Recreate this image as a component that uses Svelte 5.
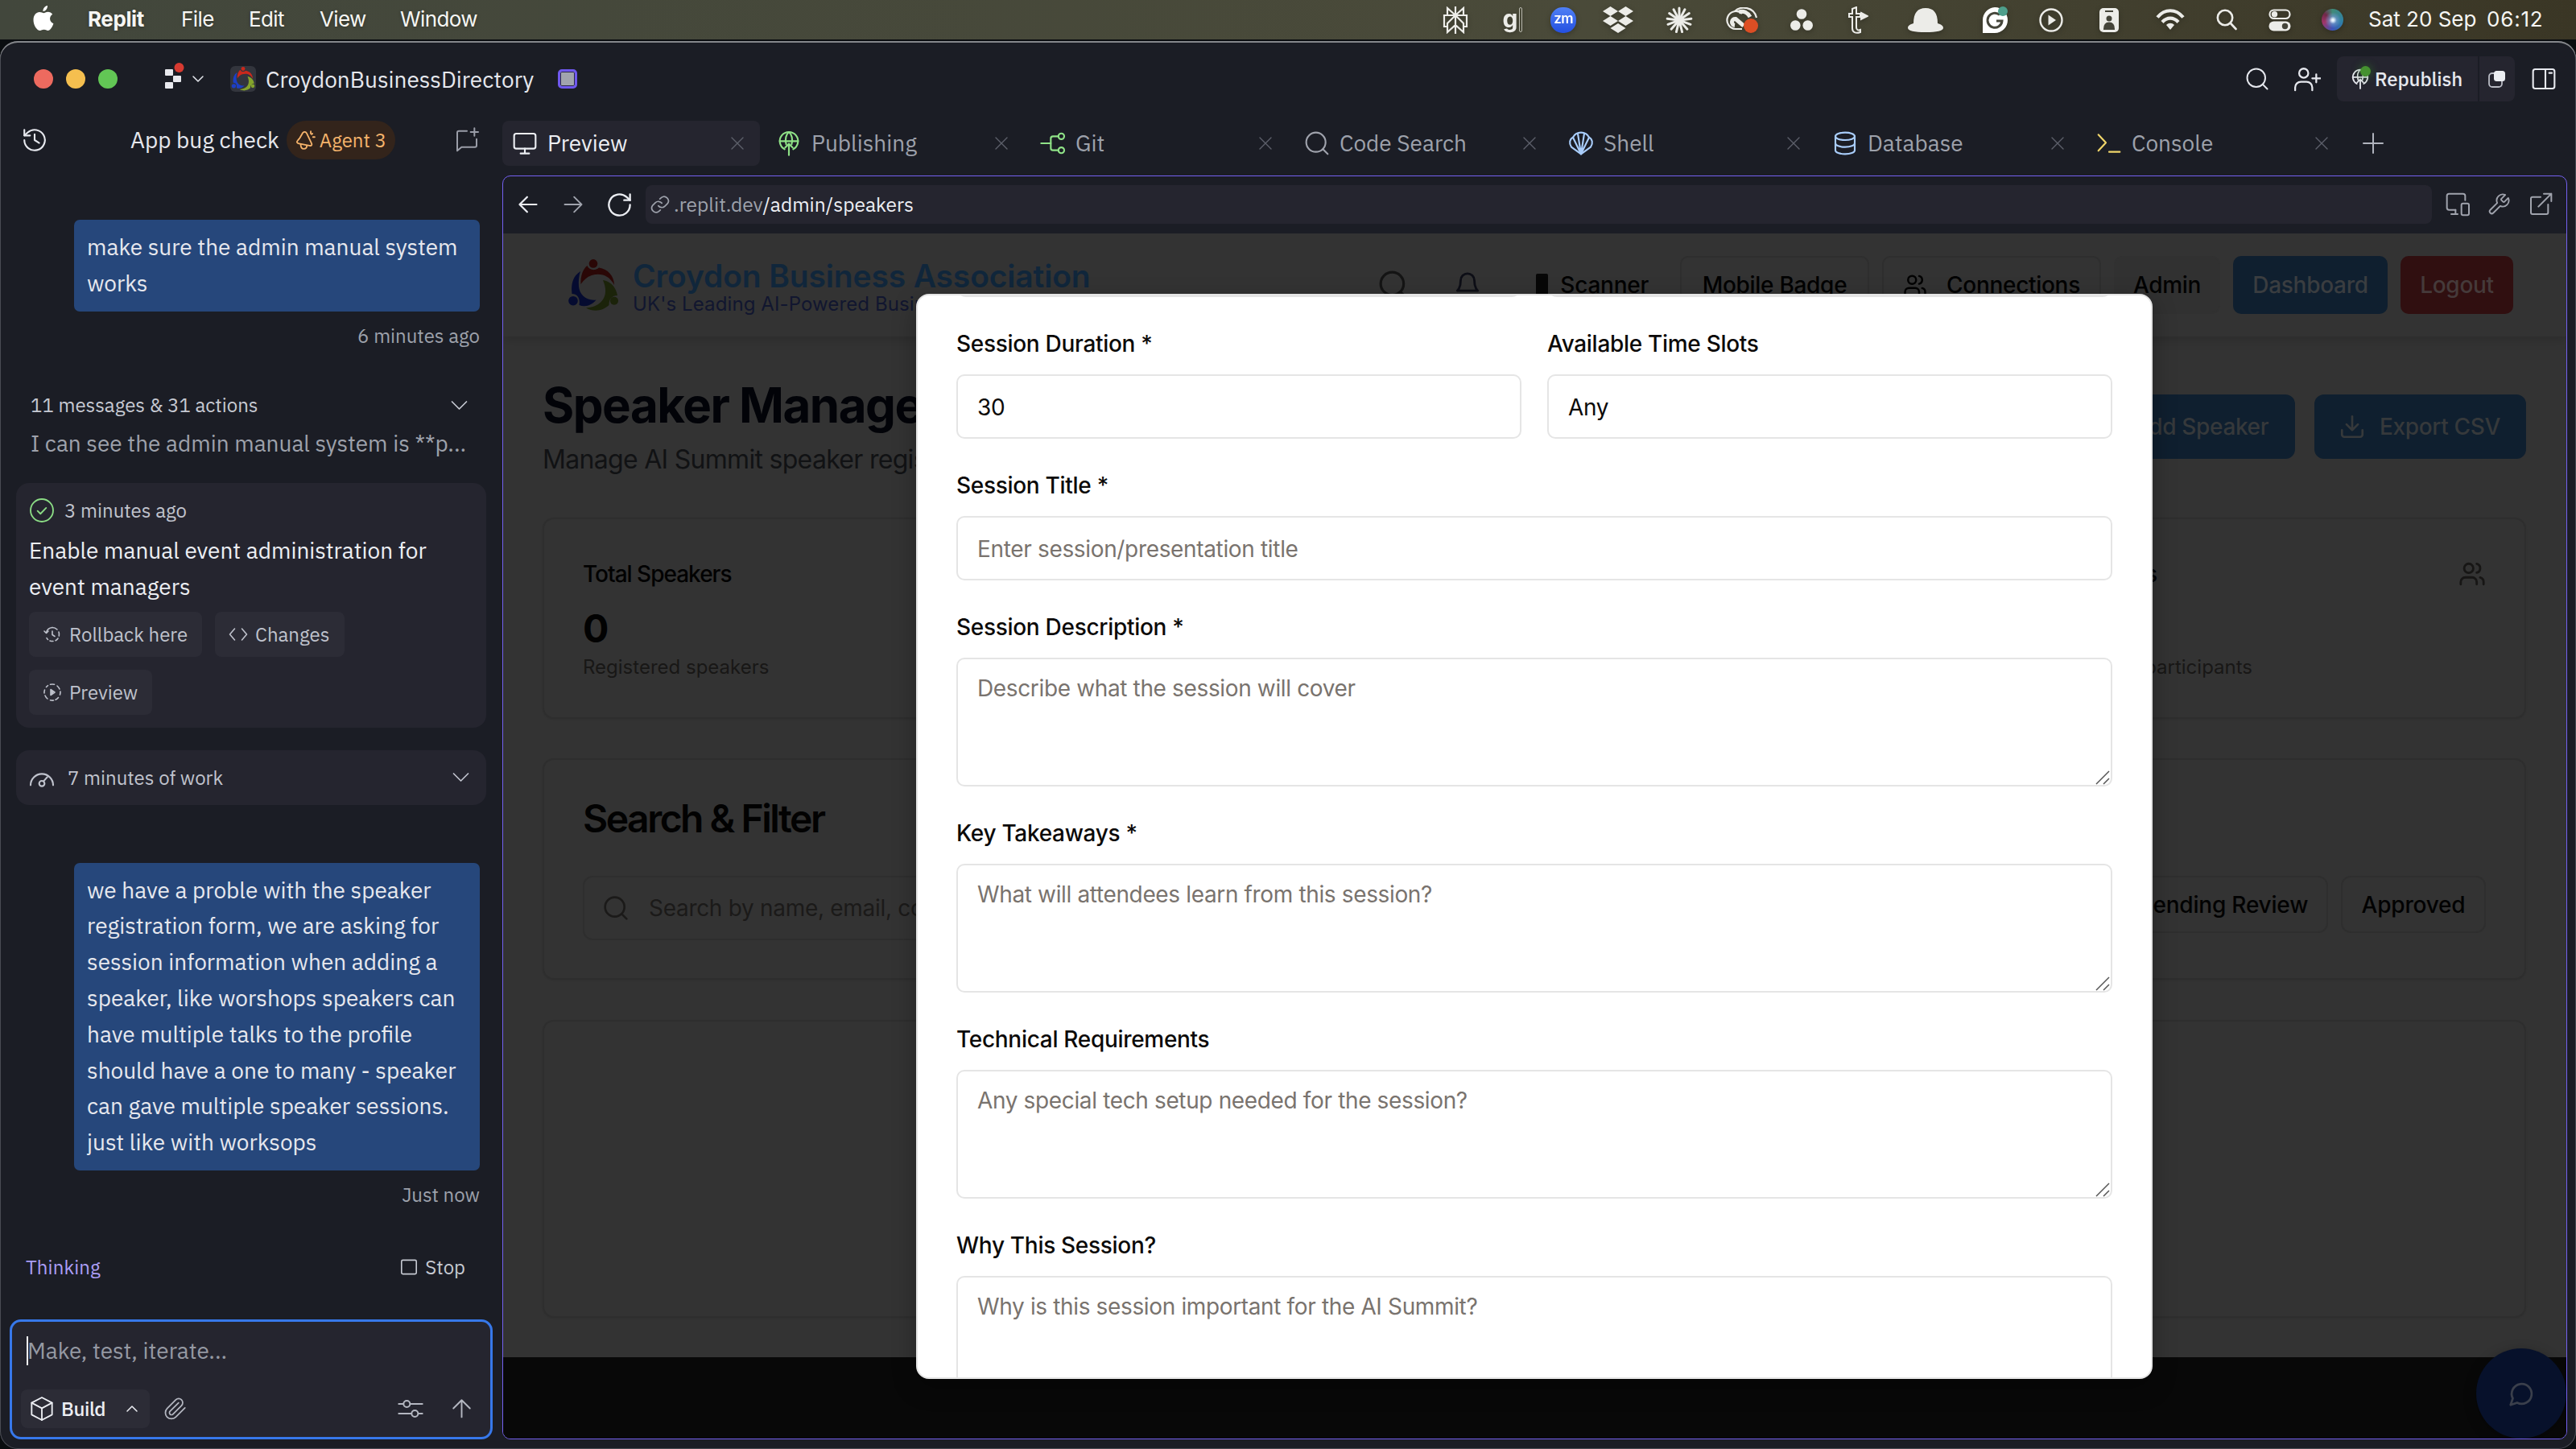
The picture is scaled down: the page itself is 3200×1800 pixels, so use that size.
<script>
  const icons = {
    history: ['M3 12a9 9 0 1 0 3-6.7L3 8', 'M3 3v5h5', 'M12 7v5l4 2.5'],
    chatplus: ['M21 11v6a1.5 1.5 0 0 1-1.5 1.5H7L3 22V5a1.5 1.5 0 0 1 1.500-1.500H12', 'M19 1v7M15.500 4.500h7'],
    monitor: ['M4 3h16a2 2 0 0 1 2 2v10a2 2 0 0 1-2 2H4a2 2 0 0 1-2-2V5a2 2 0 0 1 2-2z', 'M12 17v4.500M8 21.500h8'],
    close: ['M5 5l14 14M19 5L5 19'],
    publish: ['M8 17.500A8.500 8.500 0 1 1 16 17.500', 'M3.500 10h17', 'M9.500 13C8 8 9.500 3.500 12 1.500c2.500 2 4 6.500 2.500 11.500', 'M12 23V12.500M8.500 16l3.500-3.500 3.500 3.500'],
    git: ['M17 5.500H12a2 2 0 0 0-2 2v9a2 2 0 0 0 2 2h5', 'M1 12h9', 'M22.500 5.500a2.700 2.700 0 1 1-5.400 0 2.700 2.700 0 0 1 5.400 0z', 'M22.500 18.500a2.700 2.700 0 1 1-5.400 0 2.700 2.700 0 0 1 5.400 0z'],
    search: ['M20 11a9 9 0 1 1-18 0 9 9 0 0 1 18 0z', 'M17.500 17.500L22 22'],
    shell: ['M12 22L3 15.500C0.500 12 1.500 8 4.500 6.500 6 3.500 9 2 12 2s6 1.500 7.500 4.500c3 1.500 4 5.500 1.500 9z', 'M12 22L4.500 6.500M12 22L9 3M12 22l3-19M12 22l7.500-15.500'],
    database: ['M21 5.500c0 2-4 3.500-9 3.500S3 7.500 3 5.500 7 2 12 2s9 1.500 9 3.500z', 'M3 5.500v13C3 20.500 7 22 12 22s9-1.500 9-3.500v-13', 'M3 12c0 2 4 3.500 9 3.500s9-1.500 9-3.500'],
    console: ['M2 4l7 7.500L2 19', 'M12 20h10'],
    plus: ['M12 3v18M3 12h18'],
    back: ['M21 12H3M11 4l-8 8 8 8'],
    forward: ['M3 12h18M13 4l8 8-8 8'],
    reload: ['M21 12a9 9 0 1 1-3-6.700L21 8', 'M21 3v5h-5'],
    link: ['M10 13.500a5 5 0 0 0 7.500.5l3-3a5 5 0 0 0-7-7l-1.800 1.700', 'M14 10.500a5 5 0 0 0-7.500-.5l-3 3a5 5 0 0 0 7 7l1.800-1.700'],
    devices: ['M10 17H4a2 2 0 0 1-2-2V4a2 2 0 0 1 2-2h13a2 2 0 0 1 2 2v4', 'M10 17v4M6 21h6', 'M17 11h4a1.500 1.500 0 0 1 1.500 1.500v8A1.500 1.500 0 0 1 21 22h-4a1.500 1.500 0 0 1-1.500-1.500v-8A1.500 1.500 0 0 1 17 11z'],
    wrench: ['M14.700 6.300a1 1 0 0 0 0 1.400l1.600 1.600a1 1 0 0 0 1.400 0l3.770-3.770a6 6 0 0 1-7.940 7.940l-6.910 6.910a2.120 2.120 0 0 1-3-3l6.910-6.910a6 6 0 0 1 7.940-7.940l-3.760 3.760z'],
    external: ['M12 5H4.500A1.500 1.500 0 0 0 3 6.500v13A1.500 1.500 0 0 0 4.500 21h13a1.500 1.500 0 0 0 1.500-1.500V12', 'M15 2h7v7M22 2L10 14'],
    userplus: ['M13 7a4 4 0 1 1-8 0 4 4 0 0 1 8 0z', 'M1.500 22v-2.500a5 5 0 0 1 5-5h5a5 5 0 0 1 5 5V22', 'M20 8v7M16.500 11.500h7'],
    panel: ['M4 3h16a2 2 0 0 1 2 2v14a2 2 0 0 1-2 2H4a2 2 0 0 1-2-2V5a2 2 0 0 1 2-2z', 'M13.500 3v18M17 6.500h2.500'],
    down: ['M4 8l8 8 8-8'],
    up: ['M4 16l8-8 8 8'],
    check: ['M22.500 12a10.500 10.500 0 1 1-21 0 10.500 10.500 0 0 1 21 0z', 'M8 12.500l2.700 2.700 5.300-5.500'],
    rollback: ['M2 8l2.500 2.500L7 8', 'M4.500 10A8.500 8.500 0 0 1 12 3.500', 'M12 3.500a8.500 8.500 0 0 1 6 2.500M20 9a8.500 8.500 0 0 1 .3 5M19 17a8.500 8.500 0 0 1-3 2.700M13 20.500a8.500 8.500 0 0 1-4-.5M6.500 18.500a8 8 0 0 1-1.500-2', 'M12 8v4.500l3 2'],
    code: ['M7.500 5L1.500 12l6 7M16.500 5l6 7-6 7'],
    play: ['M9.500 2.300a10 10 0 0 1 5 0M18 4a10 10 0 0 1 3 4M22 11a10 10 0 0 1-.5 4M19.500 18.500a10 10 0 0 1-3.500 2.700M13.500 22a10 10 0 0 1-4-.3M6 20a10 10 0 0 1-3-4M2 13a10 10 0 0 1 .5-4M4.500 5.500A10 10 0 0 1 6.500 3.600', 'M10 8.500l5 3.500-5 3.500z', 'M11 10.500l2 1.500-2 1.500z'],
    gauge: ['M1.500 19a10.500 10.500 0 1 1 21 0', 'M14.500 17.500a2.500 2.500 0 1 1-5 0 2.500 2.500 0 0 1 5 0z', 'M13.500 15.500L17 11.500'],
    square: ['M5 4h14a1.500 1.500 0 0 1 1.500 1.500v13A1.500 1.500 0 0 1 19 20H5a1.500 1.500 0 0 1-1.500-1.500v-13A1.500 1.500 0 0 1 5 4z'],
    cube: ['M12 1.500l9.500 5v11L12 22.500l-9.500-5v-11z', 'M2.500 6.500L12 11.500l9.500-5M12 11.500v11'],
    clip: ['M21.400 11.050l-9.190 9.190a6 6 0 0 1-8.490-8.490l8.570-8.570A4 4 0 1 1 18 8.840l-8.590 8.570a2 2 0 0 1-2.830-2.830l8.490-8.480'],
    sliders: ['M1 7.500h4.500M11.500 7.500H23M8.500 4.500a3 3 0 1 0 0 6 3 3 0 0 0 0-6zM1 16.500h12M19 16.500h4M16 13.500a3 3 0 1 0 0 6 3 3 0 0 0 0-6z'],
    send: ['M12 21V3.500M3.500 12L12 3.500l8.500 8.500'],
    agent: ['M9.500 3.500C11 2 13 2.500 14 4.500l5.500 11.500c.5 1.500 0 2.500-1.500 2.500L5 16C2.500 15.500 2 14 3.500 12.500L6 9.500z', 'M7 17c0 3 1.500 5 3.500 5s3.500-1.500 3.500-3.500', 'M18.500 2v2.500M21 8.500h2M20.500 4.500l-1 1'],
    users: ['M16 21v-2a4 4 0 0 0-4-4H6a4 4 0 0 0-4 4v2', 'M13 7a4 4 0 1 1-8 0 4 4 0 0 1 8 0z', 'M22 21v-2a4 4 0 0 0-3-3.870', 'M16 3.130a4 4 0 0 1 0 7.750'],
    bell: ['M6 8a6 6 0 0 1 12 0c0 7 3 9 3 9H3s3-2 3-9', 'M10.300 21a1.940 1.940 0 0 0 3.400 0'],
    download: ['M21 15v4a2 2 0 0 1-2 2H5a2 2 0 0 1-2-2v-4', 'M7 10l5 5 5-5M12 15V3'],
    bubble: ['M7.900 20A9 9 0 1 0 4 16.100L2 22Z']
  };

  const tabs = [
    { label: 'Preview', icon: 'monitor', tone: 'white', active: true },
    { label: 'Publishing', icon: 'publish', tone: 'green' },
    { label: 'Git', icon: 'git', tone: 'green' },
    { label: 'Code Search', icon: 'search', tone: 'grey' },
    { label: 'Shell', icon: 'shell', tone: 'blue' },
    { label: 'Database', icon: 'database', tone: 'blue' },
    { label: 'Console', icon: 'console', tone: 'yellow' }
  ];

  const areas = [
    { label: 'Session Description *', hint: 'Describe what the session will cover' },
    { label: 'Key Takeaways *', hint: 'What will attendees learn from this session?' },
    { label: 'Technical Requirements', hint: 'Any special tech setup needed for the session?' },
    { label: 'Why This Session?', hint: 'Why is this session important for the AI Summit?' }
  ];

  const request = [
    'we have a proble with the speaker',
    'registration form, we are asking for',
    'session information when adding a',
    'speaker, like worshops speakers can',
    'have multiple talks to the profile',
    'should have a one to many - speaker',
    'can gave multiple speaker sessions.',
    'just like with worksops'
  ];

  const rays = [0, 1, 2, 3, 4, 5, 6, 7, 8, 9, 10, 11, 12].map((i) => i * (360 / 13));
</script>

{#snippet icon(name, size, weight = 1.5)}
  <svg class="icon" width={size} height={size} viewBox="0 0 24 24" fill="none" stroke="currentColor" stroke-width={weight} stroke-linecap="round" stroke-linejoin="round">
    {#each icons[name] as d}<path {d} />{/each}
  </svg>
{/snippet}

{#snippet people(width, height, red, blue, green)}
  <svg class="icon" {width} {height} viewBox="0 0 62 65">
    <g fill={red}><circle cx="31" cy="5.400" r="5.300" /><path d="M15.500 31C15 21 18 12 23.500 8c2 5.500 9.500 7 14.500 2.500C49 12 57 21 57 32 51 20 40 16.500 29 20c-6 2-10 6-13.500 11z" /></g>
    <g fill={blue}><circle cx="6" cy="51.700" r="5.800" /><path d="M15 15C6 21 3 30 4.500 43c7 0 10.500 6 9 14 8 3 16 0 21-6.500C22 52 14 44 13 34c-.5-7 0-13 2-19z" /></g>
    <g fill={green}><circle cx="57" cy="51.700" r="5" /><path d="M43 26c9 1.500 16 8 18 19-6 0-10.500 4-10.500 12C43 64 32 66 22 60.500 37 60 53 49 43 26z" /></g>
  </svg>
{/snippet}

<div class="screen">
  <header class="menubar">
    <nav class="menus">
      <svg class="apple" width="26" height="32" viewBox="0 0 26 32" fill="#fff"><path d="M18 0c.3 3.500-2.300 7-5.600 7C12 3.800 14.900.5 18 0z" /><path d="M13.300 9.200C14.600 9.200 16 7.800 18.600 7.800c2.200 0 4.300 1.100 5.600 3-4.700 2.900-3.900 9.600 1.200 11.400C24.300 26 21.400 31 18.500 31c-1.900 0-2.600-1.200-4.900-1.200S10.500 31 8.700 31C5 31 .5 24.400.5 17.700.5 11.500 4.300 8 8 8c2.400 0 4 1.200 5.300 1.200z" /></svg>
      <b class="m-app">Replit</b><span class="m-file">File</span><span class="m-edit">Edit</span><span class="m-view">View</span><span>Window</span>
    </nav>
    <div class="tray">
      <svg width="32" height="34" viewBox="0 0 32 34" fill="none" stroke="#ecece8" stroke-width="2.200"><path d="M16 0v34M16 11L6 2v9M16 11l10-9v9M5 25H2V11h28v14h-3M16 11L6 21v11l10-9 10 9V21z" /></svg>
      <span class="gee">g<i></i></span>
      <span class="zoom">zm</span>
      <svg width="38" height="33" viewBox="0 0 38 33" fill="#ecece8"><path d="M9.500 0l9.500 6-9.500 6L0 6zM28.500 0L38 6l-9.500 6L19 6zM9.500 12l9.500 6-9.500 6L0 18zM28.500 12l9.500 6-9.500 6-9.500-6zM19 21l9.500 6-9.500 6-9.500-6z" /></svg>
      <svg width="34" height="34" viewBox="-17 -17 34 34" stroke="#ecece8" stroke-width="3" stroke-linecap="round"><circle r="5" fill="#ecece8" stroke="none" />{#each rays as r}<path d="M0 -3V-15" transform="rotate({r})" />{/each}</svg>
      <svg width="40" height="32" viewBox="0 0 40 32" fill="none" stroke="#ecece8" stroke-width="2.600"><path d="M11 5C18-2 35-1 38 13M20 27H12A11 11 0 1 1 20 8" stroke-width="2.200" /><path d="M22 23L12 14.500a4 4 0 0 0-1 8M16 6c6-2 11 1 14 6" stroke-width="5" /><circle cx="31" cy="23" r="9" fill="#dc4e24" stroke="none" /></svg>
      <svg width="28" height="28" viewBox="0 0 28 28" fill="#ecece8"><circle cx="14" cy="6.500" r="6.300" /><circle cx="6.300" cy="20.500" r="6.300" /><circle cx="21.700" cy="20.500" r="6.300" /></svg>
      <svg width="26" height="34" viewBox="0 0 26 34" fill="none" stroke="#ecece8" stroke-width="2"><path d="M6 3l5-2v8h5v4h-5v13c0 3 2 4 5 3v3c-6 2-10 0-10-5V13H2V9h4z" /><path d="M17 8l8 4-8 4z" fill="#ecece8" /></svg>
      <svg width="44" height="30" viewBox="0 0 44 30" fill="#ecece8"><path d="M7 19C7 6 12 0 22 0s15 6 15 19c4 1 7 3 7 5.500 0 4-8 5.500-22 5.500S0 28.500 0 24.500C0 22 3 20 7 19z" /></svg>
      <svg width="34" height="34" viewBox="0 0 34 34"><path d="M17 1a16 16 0 1 1 0 32H2V17A16 16 0 0 1 17 1z" fill="#fff" /><path d="M23 10.500A9 9 0 1 0 26 18h-7" fill="none" stroke="#45453a" stroke-width="3" /><circle cx="27" cy="6" r="6" fill="#4e9f8c" /></svg>
      <svg width="30" height="30" viewBox="0 0 30 30" fill="#ecece8"><circle cx="15" cy="15" r="13.500" fill="none" stroke="#ecece8" stroke-width="2.400" /><path d="M11.500 8.500L21 15l-9.500 6.500z" /></svg>
      <svg width="24" height="30" viewBox="0 0 24 30"><rect width="24" height="30" rx="5" fill="#ecece8" /><path d="M7 4h10M6 26c0-5 2.500-7.500 6-7.500s6 2.500 6 7.500z" fill="#45453a" stroke="#45453a" stroke-width="2" /><circle cx="12" cy="13" r="3.500" fill="#45453a" /></svg>
      <svg width="36" height="27" viewBox="0 0 36 27" fill="none" stroke="#ecece8" stroke-width="4.200"><path d="M2 10.500C11-.5 25-.5 34 10.500M8 16.500c6-6.500 14-6.500 20 0" /><path d="M18 26l-5-6c3-3 7-3 10 0z" fill="#ecece8" stroke="none" /></svg>
      <svg width="26" height="27" viewBox="0 0 26 27" fill="none" stroke="#ecece8" stroke-width="2.600" stroke-linecap="round"><circle cx="11" cy="11" r="9.200" /><path d="M18 18l6.500 7" /></svg>
      <svg width="28" height="28" viewBox="0 0 28 28"><rect x="1.500" y="1.500" width="25" height="10.500" rx="5.200" fill="none" stroke="#ecece8" stroke-width="2.200" /><circle cx="7.500" cy="6.700" r="3.700" fill="#ecece8" /><rect x=".5" y="15.500" width="27" height="12" rx="6" fill="#ecece8" /><circle cx="20.500" cy="21.500" r="3.700" fill="#45453a" /></svg>
      <i class="siri"></i>
    </div>
    <span class="date">Sat 20 Sep</span><span class="clock">06:12</span>
  </header>

  <main class="window">
    <div class="titlebar">
      <div class="lights"><i class="r"></i><i class="y"></i><i class="g"></i></div>
      <svg class="replit" width="24" height="32" viewBox="0 0 24 32" fill="#e8e9ee"><rect y="8" width="10" height="8" rx="1" /><rect x="10" y="16" width="10" height="8" rx="1" /><rect y="24" width="10" height="8" rx="1" /><circle cx="17.500" cy="6" r="6" fill="#d73a31" /></svg>
      <span class="chev">{@render icon('down', 18, 2)}</span>
      <span class="project">{@render people(30, 30, '#c9281c', '#1d3fc4', '#84a32c')}</span>
      <span class="name">CroydonBusinessDirectory</span>
      <i class="running"></i>
      <div class="actions">
        <span class="a-search">{@render icon('search', 30, 1.6)}</span>
        <span class="a-user">{@render icon('userplus', 34, 1.6)}</span>
        <span class="republish"><span class="live">{@render icon('publish', 26, 1.7)}<i></i></span>Republish</span>
        <span class="stack"><svg width="22" height="22" viewBox="0 0 22 22"><rect x="1" y="4" width="16" height="17" rx="4" fill="none" stroke="#b9bbc4" stroke-width="1.800" /><rect x="7" y="1" width="14" height="13" rx="3.500" fill="#eceef2" /></svg></span>
        <span class="a-panel">{@render icon('panel', 32, 1.6)}</span>
      </div>
    </div>

    <div class="body">
      <aside class="chat">
        <div class="chat-head">
          {@render icon('history', 34, 1.5)}
          <div class="topic">App bug check<span class="agent">{@render icon('agent', 26, 1.7)}Agent 3</span></div>
          <span class="dim">{@render icon('chatplus', 32, 1.5)}</span>
        </div>
        <div class="bubble first">make sure the admin manual system<br />works</div>
        <div class="stamp">6 minutes ago</div>
        <div class="summary"><span>11 messages &amp; 31 actions</span>{@render icon('down', 27, 1.5)}</div>
        <div class="snippet">I can see the admin manual system is **p...</div>
        <section class="card">
          <div class="done"><span class="green">{@render icon('check', 32, 1.4)}</span><span>3 minutes ago</span></div>
          <div class="headline">Enable manual event administration for<br />event managers</div>
          <div class="chips">
            <span class="chip roll">{@render icon('rollback', 24, 1.6)}Rollback here</span>
            <span class="chip changes">{@render icon('code', 24, 1.6)}Changes</span>
            <span class="chip prev">{@render icon('play', 24, 1.6)}Preview</span>
          </div>
        </section>
        <div class="work">{@render icon('gauge', 32, 1.6)}<span>7 minutes of work</span>{@render icon('down', 27, 1.5)}</div>
        <div class="bubble second">{#each request as line}<div>{line}</div>{/each}</div>
        <div class="stamp later">Just now</div>
        <div class="status"><span class="thinking">Thinking</span><span class="stop">{@render icon('square', 26, 1.5)}Stop</span></div>
        <div class="composer">
          <div class="prompt"><i></i>Make, test, iterate...</div>
          <div class="tools">
            <span class="build">{@render icon('cube', 32, 1.4)}<b>Build</b>{@render icon('up', 18, 2)}</span>
            <span class="clip">{@render icon('clip', 30, 1.4)}</span>
            <span class="sliders">{@render icon('sliders', 32, 1.5)}</span>
            <span class="send">{@render icon('send', 29, 1.6)}</span>
          </div>
        </div>
      </aside>

      <section class="workspace">
        <div class="tabs">
          {#each tabs as tab}
            <div class="tab" class:active={tab.active}>
              <span class="lead {tab.tone}">{@render icon(tab.icon, 32, 1.6)}</span>
              <span class="label">{tab.label}</span>
              <span class="x">{@render icon('close', 24, 1.4)}</span>
            </div>
          {/each}
          <span class="add">{@render icon('plus', 32, 1.5)}</span>
        </div>

        <div class="pane">
          <div class="address">
            <span class="white b1">{@render icon('back', 28, 1.9)}</span>
            <span class="grey b2">{@render icon('forward', 28, 1.6)}</span>
            <span class="white b3">{@render icon('reload', 35, 1.6)}</span>
            <div class="url">{@render icon('link', 26, 1.6)}<span>.replit.dev<b>/admin/speakers</b></span></div>
            <span class="grey n1">{@render icon('devices', 32, 1.5)}</span>
            <span class="grey n2">{@render icon('wrench', 30, 1.5)}</span>
            <span class="grey n3">{@render icon('external', 32, 1.5)}</span>
          </div>

          <div class="page">
            <div class="site-head">
              {@render people(62, 65, '#2a0706', '#050b30', '#1b230a')}
              <div class="brand"><strong>Croydon Business Association</strong><span>UK's Leading AI-Powered Business Network</span></div>
              <div class="site-nav">
                <span class="s-search">{@render icon('search', 38, 2)}</span>
                <span class="s-bell">{@render icon('bell', 34, 2)}</span>
                <span class="scanner"><i></i>Scanner</span>
                <span class="nav-btn mobile">Mobile Badge</span>
                <span class="nav-btn conn">{@render icon('users', 30, 2)}Connections</span>
                <span class="nav-btn admin">Admin</span>
                <span class="nav-btn dash">Dashboard</span>
                <span class="nav-btn out">Logout</span>
              </div>
            </div>

            <div class="content">
              <div class="hero">
                <div><h1>Speaker Manage</h1><p>Manage AI Summit speaker registrations</p></div>
                <div class="hero-btns">
                  <span class="blue-btn add-speaker">{@render icon('plus', 30, 2)}Add Speaker</span>
                  <span class="blue-btn export">{@render icon('download', 34, 1.9)}Export CSV</span>
                </div>
              </div>
              <div class="box stats">
                <div><h3>Total Speakers</h3><strong>0</strong><p>Registered speakers</p></div>
                <div class="attend"><h3>Attendees</h3><strong></strong><p>Total participants</p></div>
                <span class="s-users">{@render icon('users', 34, 2)}</span>
              </div>
              <div class="box filter">
                <h2>Search &amp; Filter</h2>
                <div class="filter-row">
                  <div class="find">{@render icon('search', 32, 2)}<span>Search by name, email, company</span></div>
                  <span class="pill pending">Pending Review</span>
                  <span class="pill approved">Approved</span>
                </div>
              </div>
              <div class="box empty"></div>
            </div>
            <div class="footer"></div>

            <div class="fab">{@render icon('bubble', 33, 2)}</div>

            <div class="modal">
              <div class="cols peek"><i></i><i></i></div>
              <div class="cols">
                <div class="field"><span class="lbl">Session Duration *</span><div class="input filled">30</div></div>
                <div class="field"><span class="lbl">Available Time Slots</span><div class="input filled">Any</div></div>
              </div>
              <div class="field"><span class="lbl">Session Title *</span><div class="input">Enter session/presentation title</div></div>
              {#each areas as area}
                <div class="field"><span class="lbl">{area.label}</span>
                  <div class="area">{area.hint}
                    <svg class="grip" width="18" height="18" viewBox="0 0 18 18" stroke="#555" stroke-width="1.500"><path d="M1 17L17 1M10 17l7-7" /></svg>
                  </div>
                </div>
              {/each}
            </div>
          </div>
        </div>
      </section>
    </div>
  </main>
</div>

<style>
  :global(body) { margin: 0; background: #0a0d10; }
  * { box-sizing: border-box; }
  h1, h2, h3, p { margin: 0; }
  svg { display: block; flex: none; }
  i { display: block; flex: none; }

  .screen { width: 3200px; height: 1800px; overflow: hidden; display: flex; flex-direction: column; background: #0a0d10; font-family: 'IBM Plex Sans', Roboto, sans-serif; font-size: 28px; white-space: nowrap; color: #e6e8ee; }

  .menubar { height: 49px; flex: none; display: flex; align-items: center; background: linear-gradient(90deg, #42473c, #4a4a39 62%, #3a3625); font-family: Inter, sans-serif; font-size: 26px; color: #f6f6f3; margin-bottom: 2px; }
  .menus { display: flex; align-items: center; height: 47px; width: 1773px; padding: 0 0 3px 41px; letter-spacing: -.6px; text-shadow: 0 1px 4px rgba(0, 0, 0, .3); }
  .apple { margin: 0 42px 0 0; }
  .m-app { width: 116px; letter-spacing: -.4px; }
  .m-file { width: 84px; }
  .m-edit { width: 88px; }
  .m-view { width: 100px; }
  .tray { display: grid; grid-template-columns: 70px 72px 54px 82px 70px 86px 62px 78px 90px 82px 58px 86px 66px 74px 58px 72px; justify-items: center; align-items: center; height: 48px; filter: drop-shadow(0 2px 3px rgba(0, 0, 0, .25)); }
  .gee { display: flex; align-items: center; gap: 2px; height: 34px; padding-bottom: 3px; font: 700 30px/30px Inter, sans-serif; color: #ecece8; }
  .gee i { width: 4px; height: 31px; margin-top: 3px; border: 1px solid #b9b9ae; border-radius: 2px; }
  .zoom { width: 32px; height: 32px; border-radius: 15px; background: linear-gradient(#4f80f5, #2450e0); font: 600 17px/29px Inter, sans-serif; text-align: center; color: #fff; letter-spacing: -.8px; }
  .siri { width: 27px; height: 27px; border-radius: 50%; background: radial-gradient(circle at 52% 52%, #e8f4ff 0 6%, rgba(110, 150, 200, .7) 24%, transparent 50%), conic-gradient(#3f8a78, #2f7fa8 30%, #3c54b8 50%, #a03568 70%, #702848 85%, #3f8a78); }
  .date { margin: 0 0 3px 9px; width: 147px; }
  .clock { margin-bottom: 3px; letter-spacing: .8px; }

  .window { position: relative; flex: 1; border-radius: 22px; background: #1b1d25; display: flex; flex-direction: column; box-shadow: inset 0 2px 0 #85878b, inset 0 0 0 1px #4a4c53; overflow: hidden; padding-top: 2px; }
  .titlebar { height: 90px; flex: none; display: flex; align-items: center; padding: 0 24px 0 42px; }
  .lights { display: flex; gap: 16px; }
  .lights i { width: 24px; height: 24px; border-radius: 50%; }
  .lights .r { background: #ed6a5f; }
  .lights .y { background: #f5bf4f; }
  .lights .g { background: #62c655; }
  .replit { margin: 0 8px 8px 59px; }
  .project { margin: 0 12px 0 31px; width: 32px; height: 32px; border-radius: 6px; background: #33353d; display: grid; place-items: center; }
  .name { width: 363px; }
  .running { width: 24px; height: 24px; border: 3px solid #6f58ee; border-radius: 5px; background: #a1a4ae; box-shadow: inset 0 0 0 1px #2c2a48; }
  .actions { margin-left: auto; display: flex; align-items: center; }
  .a-search { margin-right: 30px; }
  .a-user { margin-right: 20px; }
  .republish { width: 175px; height: 56px; margin-right: 2px; border-radius: 8px 0 0 8px; background: #25252f; display: flex; align-items: center; gap: 5px; padding-left: 16px; font-size: 24px; font-weight: 500; letter-spacing: -.1px; }
  .live { position: relative; }
  .live i { position: absolute; right: 0; top: -3px; width: 13px; height: 13px; border-radius: 50%; background: #45912f; box-shadow: 0 0 8px 3px rgba(50, 120, 40, .35); }
  .stack { width: 44px; height: 56px; margin-right: 20px; border-radius: 0 8px 8px 0; background: #25252f; display: grid; place-items: center; }

  .body { display: flex; flex: 1; min-height: 0; }
  .chat { width: 624px; flex: none; display: flex; flex-direction: column; padding: 0 20px; }
  .chat-head { display: flex; align-items: center; height: 61px; padding: 0 8px 0 6px; }
  .topic { display: flex; align-items: center; margin: 0 auto 0 102px; gap: 9px; }
  .agent { display: flex; align-items: center; gap: 5px; width: 135px; height: 48px; border-radius: 24px; background: #33241b; color: #f5b36b; font-size: 24px; padding-left: 10px; }
  .dim { color: #9a9da8; }
  .bubble { margin-left: 72px; width: 504px; padding: 12px 16px; border-radius: 7px; background: #26477b; line-height: 44.8px; }
  .first { margin-top: 69px; }
  .second { margin-top: 72px; height: 382px; }
  .stamp { margin: 16px 8px 0 0; height: 28px; line-height: 28px; text-align: right; font-size: 24px; color: #9da1ab; }
  .summary { display: flex; align-items: center; justify-content: space-between; height: 31px; margin: 57px 20px 0 18px; font-size: 24px; color: #c6c9d2; }
  .snippet { margin: 12px 0 1px 18px; height: 40px; line-height: 39px; color: #9da1ab; }
  .card { margin-top: 28px; width: 584px; height: 304px; border-radius: 16px; background: #25252f; padding: 18px 16px; }
  .done { display: flex; align-items: center; gap: 12px; height: 32px; font-size: 24px; color: #c0c3cd; }
  .green { color: #8bdc85; }
  .headline { margin-top: 11px; line-height: 45px; color: #eceef3; }
  .chips { display: flex; flex-wrap: wrap; gap: 16px; margin-top: 9px; }
  .chip { display: flex; align-items: center; gap: 9px; height: 56px; padding-left: 17px; border-radius: 8px; background: #2c2c36; font-size: 24px; color: #bfc2cc; }
  .roll { width: 215px; }
  .changes { width: 161px; }
  .prev { width: 153px; }
  .work { margin-top: 28px; width: 584px; height: 68px; border-radius: 16px; background: #25252f; display: flex; align-items: center; padding: 0 18px 0 16px; font-size: 24px; color: #c0c3cd; }
  .work span { margin: 0 auto 0 16px; }
  .later { margin-top: 16px; margin-bottom: 1px; }
  .status { display: flex; align-items: center; justify-content: space-between; height: 32px; margin: 59px 26px 0 12px; font-size: 24px; }
  .thinking { color: #ab9df5; letter-spacing: .1px; }
  .stop { display: flex; align-items: center; gap: 7px; color: #c6c9d2; }
  .composer { margin: 49px 0 0 -8px; width: 600px; height: 149px; border: 3px solid #3778ea; border-radius: 14px; background: #25252f; padding: 17px 11px 0; }
  .prompt { display: flex; align-items: center; height: 38px; padding-left: 7px; color: #9599a3; }
  .prompt i { width: 2px; height: 36px; margin-right: -1px; background: #f3f4f7; }
  .tools { display: flex; align-items: center; height: 48px; margin-top: 29px; color: #b4b7c1; }
  .build { display: flex; align-items: center; width: 160px; height: 48px; border-radius: 8px; background: #2c2c36; padding-left: 10px; color: #eceef3; }
  .build b { font-size: 24px; font-weight: 500; letter-spacing: -.4px; margin: 0 auto 0 8px; }
  .build :global(svg:last-child) { margin-right: 13px; }
  .clip { margin-left: 17px; }
  .sliders { margin-left: auto; }
  .send { margin: 0 10px 0 33px; }

  .workspace { flex: 1; min-width: 0; display: flex; flex-direction: column; padding: 7px 11px 12px 0; }
  .tabs { display: flex; gap: 8px; align-items: center; height: 56px; flex: none; }
  .tab { width: 320px; height: 56px; border-radius: 8px; display: flex; align-items: center; padding: 0 16px 0 12px; color: #9da1ab; }
  .tab.active { background: #25252f; color: #eceef3; }
  .label { margin: 0 auto 0 12px; padding-bottom: 1px; }
  .x { color: #5d606b; }
  .white { color: #eceef3; }
  .grey { color: #a0a3ad; }
  .lead.green { color: #8fe287; }
  .blue { color: #a9cdfb; }
  .yellow { color: #f0d56a; }
  .add { margin-left: 12px; color: #b0b3bd; }

  .pane { margin-top: 12px; flex: 1; min-height: 0; border: 1px solid #7460f0; border-radius: 10px; overflow: hidden; display: flex; flex-direction: column; }
  .address { display: flex; align-items: center; height: 71px; flex: none; padding: 0 16px 1px 17px; }
  .b2 { margin-left: 28px; }
  .b3 { margin: 0 15px 0 26px; }
  .url { flex: 1; height: 48px; border-radius: 8px; background: #25252f; display: flex; align-items: center; gap: 4px; padding-left: 5px; font-size: 24.600px; color: #9da1ab; }
  .url b { font-weight: 400; color: #eceef3; }
  .n1 { margin-left: 16px; }
  .n2 { margin-left: 20px; }
  .n3 { margin-left: 21px; }

  .page { position: relative; flex: 1; min-height: 0; background: #333; font-family: Inter, sans-serif; color: #020202; overflow: hidden; display: flex; flex-direction: column; }
  .site-head { display: flex; align-items: center; height: 128px; flex: none; padding: 0 66px 0 81px; box-shadow: 0 6px 12px rgba(0, 0, 0, .12); }
  .brand { display: flex; flex-direction: column; margin-left: 18px; padding-top: 7px; }
  .brand strong { font-size: 39px; line-height: 41px; font-weight: 600; letter-spacing: -.15px; color: #10263b; }
  .brand span { font-size: 24px; line-height: 30px; letter-spacing: .1px; color: #11162f; }
  .site-nav { margin-left: auto; display: flex; align-items: center; font-weight: 500; }
  .s-search { color: #141414; margin-right: 56px; }
  .s-bell { color: #0d0e16; margin-right: 68px; }
  .scanner { display: flex; align-items: center; gap: 15px; margin-right: 39px; letter-spacing: -.25px; }
  .scanner i { width: 15px; height: 28px; border-radius: 2px; background: #070707; }
  .nav-btn { display: flex; align-items: center; justify-content: center; height: 72px; border: 2px solid #2e2e2e; border-radius: 10px; margin-right: 16px; gap: 24px; letter-spacing: -.3px; }
  .mobile { width: 235px; }
  .conn { width: 272px; }
  .admin { width: 132px; background: #313131; border-color: #313131; }
  .dash { width: 192px; background: #0f1f2f; border: 0; color: #3a3d40; }
  .out { width: 140px; background: #300f10; border: 0; color: #453a3a; margin: 0; }

  .content { height: 1268px; flex: none; padding: 50px 50px 0 49px; }
  .hero { display: flex; justify-content: space-between; height: 175px; }
  .hero h1 { font-size: 60px; line-height: 70px; font-weight: 700; letter-spacing: -1.500px; color: #020308; }
  .hero p { font-size: 32px; line-height: 40px; margin-top: 13px; letter-spacing: -.7px; color: #111214; }
  .hero-btns { display: flex; gap: 24px; padding-top: 22px; }
  .blue-btn { display: flex; align-items: center; height: 80px; border-radius: 12px; background: #0f1f2f; color: #36393b; font-weight: 500; letter-spacing: -.35px; }
  .add-speaker { width: 280px; padding-left: 33px; gap: 16px; }
  .export { width: 263px; padding-left: 30px; gap: 17px; }
  .box { border: 2px solid #2e2e2e; border-radius: 14px; box-shadow: 0 1px 2px rgba(0, 0, 0, .08); }
  .stats { height: 250px; display: flex; justify-content: space-between; padding: 48px 48px 0; }
  .stats h3 { font-size: 28px; line-height: 40px; font-weight: 500; letter-spacing: -1px; }
  .stats strong { display: block; height: 64px; margin-top: 16px; font-size: 48px; line-height: 64px; }
  .stats p { font-size: 24px; line-height: 32px; color: #181716; }
  .attend { margin: 0 256px 0 auto; text-align: right; }
  .attend h3 { padding-right: 119px; }
  .s-users { margin: 3px 0 0; color: #171615; }
  .filter { margin-top: 49px; height: 275px; padding: 43px 48px 0; }
  .filter h2 { font-size: 48px; line-height: 60px; font-weight: 600; letter-spacing: -2.500px; }
  .filter-row { display: flex; height: 80px; margin-top: 41px; }
  .find { flex: 1; margin-right: 20px; border: 2px solid #2e2e2e; border-radius: 12px; display: flex; align-items: center; gap: 25px; padding-left: 23px; color: #1b1a19; letter-spacing: -.3px; }
  .pill { height: 71px; margin-right: 16px; border: 2px solid #2e2e2e; border-radius: 12px; display: grid; place-items: center; font-weight: 500; letter-spacing: -.2px; }
  .pending { width: 256px; padding-right: 4px; }
  .approved { width: 180px; margin-right: 0; }
  .empty { margin-top: 50px; height: 370px; }
  .footer { flex: 1; background: #080808; }

  .fab { position: absolute; right: 0; bottom: 0; width: 112px; height: 112px; border-radius: 50%; background: #07112b; color: #3a3f4b; display: grid; place-items: center; box-shadow: 0 4px 16px rgba(0, 0, 0, .3); }

  .modal { position: absolute; left: 513px; top: 75px; width: 1536px; height: 1348px; border: 2px solid #e4e4e4; border-radius: 16px; background: #fff; overflow: hidden; padding: 0 48px; color: #0c0a09; display: flex; flex-direction: column; gap: 44px; box-shadow: 0 10px 30px rgba(0, 0, 0, .3); }
  .cols { display: flex; gap: 32px; flex: none; }
  .cols > * { flex: 1; }
  .peek { height: 2px; }
  .peek i { height: 24px; margin-top: -22px; border: 2px solid #e4e4e4; border-radius: 12px; }
  .field { display: flex; flex-direction: column; gap: 24px; flex: none; }
  .cols > .field { flex: 1; }
  .lbl { font-weight: 500; line-height: 28px; letter-spacing: -.3px; }
  .input { height: 80px; border: 2px solid #e5e5e5; border-radius: 10px; padding: 0 24px; line-height: 79px; letter-spacing: -.34px; color: #79736e; }
  .filled { color: #0c0a09; }
  .area { position: relative; height: 160px; border: 2px solid #e5e5e5; border-radius: 10px; padding: 16px 24px; line-height: 40px; letter-spacing: -.36px; color: #79736e; }
  .grip { position: absolute; right: 1px; bottom: 0; }
</style>
